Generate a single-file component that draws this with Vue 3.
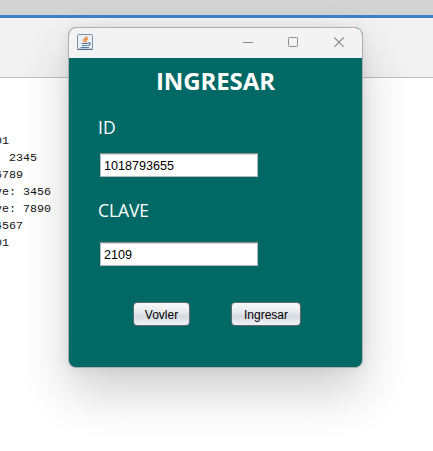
<script setup>
import { ref } from 'vue'

const logLines = ['01', '  2345', '56789', 've: 3456', 've: 7890', '4567', '01']
const offsets = [-5, -5, -12, -5, -5, -5, -5]
const id = ref('1018793655')
const clave = ref('2109')
</script>

<template>
  <div class="screen">
    <div class="tabstrip"></div>
    <div class="toolbar"></div>
    <div class="console">
      <div v-for="(line, i) in logLines" :key="i" class="line" :style="{ marginLeft: offsets[i] + 'px' }">{{ line }}</div>
    </div>

    <section class="window">
      <header class="titlebar">
        <svg class="java" width="16" height="16" viewBox="0 0 16 16" fill="none">
          <rect x=".5" y=".5" width="15" height="15" rx="1" fill="#eaf0f4" stroke="#7893aa" />
          <path d="M.5 15.4h15" stroke="#4f708c" stroke-width="1.2" />
          <path d="M10 2.5C9.6 4.2 6.6 4.6 6.7 6.4c0 .8.8 1.3 1.1 2M10.9 4.6C9 5.2 8.4 6 9.2 7c.3.5 0 .9-.4 1.4" stroke="#ee8434" stroke-width="1.4" />
          <path d="M4.5 9.5h6.5M5 11.5h5.5M3.5 13.5h8.5" stroke="#55799a" stroke-width="1.2" />
          <path d="M11.2 8.9c2.8-.6 2.6 2-.2 2.4" stroke="#55799a" stroke-width="1.2" />
        </svg>
        <svg class="controls" width="104" height="12" viewBox="0 0 104 12" fill="none" stroke="#8e8e8e">
          <path d="M0 6.5h10" />
          <rect x="45.5" y="1.5" width="9" height="9" rx=".8" />
          <path d="M91.3 1.5l9.4 9.4M100.7 1.5L91.3 10.9" stroke-width="1.2" />
        </svg>
      </header>
      <main class="form">
        <h1>INGRESAR</h1>
        <label class="id-label" for="id">ID</label>
        <input id="id" v-model="id" type="text" />
        <label class="key-label" for="clave">CLAVE</label>
        <input id="clave" v-model="clave" class="key-input" type="text" />
        <div class="actions">
          <button class="back">Vovler</button>
          <button class="enter">Ingresar</button>
        </div>
      </main>
    </section>
  </div>
</template>

<style>
body {
  overflow: hidden;
}
</style>

<style scoped>
.screen {
  position: relative;
  width: 433px;
  height: 451px;
  overflow: hidden;
  background: #fff;
}
.tabstrip {
  box-sizing: border-box;
  height: 18px;
  background: #d3d3d3;
  border-bottom: 3px solid #3c83c5;
}
.toolbar {
  box-sizing: border-box;
  height: 60px;
  background: #f2f2f2;
  border-bottom: 1px solid #bfbfbf;
}
.console {
  padding-top: 55px;
  font: 11.67px/17px "Liberation Mono", monospace;
  color: #111;
}
.line {
  white-space: pre;
}
.window {
  position: absolute;
  left: 68px;
  top: 27px;
  box-sizing: border-box;
  width: 295px;
  height: 341px;
  border: 1px solid #adb0b0;
  border-radius: 8px;
  overflow: hidden;
  background: #006865;
  box-shadow: 0 24px 48px rgba(0, 0, 0, 0.19), 0 0 12px rgba(0, 0, 0, 0.07);
}
.titlebar {
  display: flex;
  justify-content: space-between;
  box-sizing: border-box;
  height: 30px;
  padding: 6px 15px 0 8px;
  background: #f3f3f3;
}
.controls {
  margin-top: 2px;
}
.form {
  display: flex;
  flex-direction: column;
  align-items: flex-start;
  padding-left: 29px;
  color: #fff;
  font-family: "Open Sans", "Noto Sans", sans-serif;
}
h1 {
  margin: 7px 0 0 58px;
  font-size: 24px;
  line-height: 32px;
  font-weight: 700;
  letter-spacing: -0.1px;
}
label {
  font-size: 17.5px;
  line-height: 24px;
  font-weight: 400;
}
.id-label {
  margin-top: 18px;
}
.key-label {
  margin-top: 21px;
  letter-spacing: -0.1px;
}
input {
  box-sizing: border-box;
  width: 158px;
  height: 24px;
  margin: 14px 0 0 2px;
  padding: 1px 3px 0;
  border: 1px solid #b5b9bb;
  border-top-color: #8d8f91;
  border-radius: 0;
  outline: none;
  background: #fff;
  box-shadow: inset 0 1px 0 #d6d7d8;
  color: #000;
  font: 12.6px "Liberation Sans", sans-serif;
}
.key-input {
  margin-top: 20px;
}
.actions {
  display: flex;
  gap: 41px;
  margin: 36px 0 0 35px;
}
button {
  box-sizing: border-box;
  height: 24px;
  padding: 1px 0 0;
  border: 1px solid #62696c;
  border-radius: 4px;
  background: linear-gradient(#fafafb, #e6e8ec 45%, #d5d9e0 60%, #f1f3f7);
  color: #000;
  font: 12px "Liberation Sans", sans-serif;
}
.back {
  width: 57px;
}
.enter {
  width: 70px;
}
</style>
